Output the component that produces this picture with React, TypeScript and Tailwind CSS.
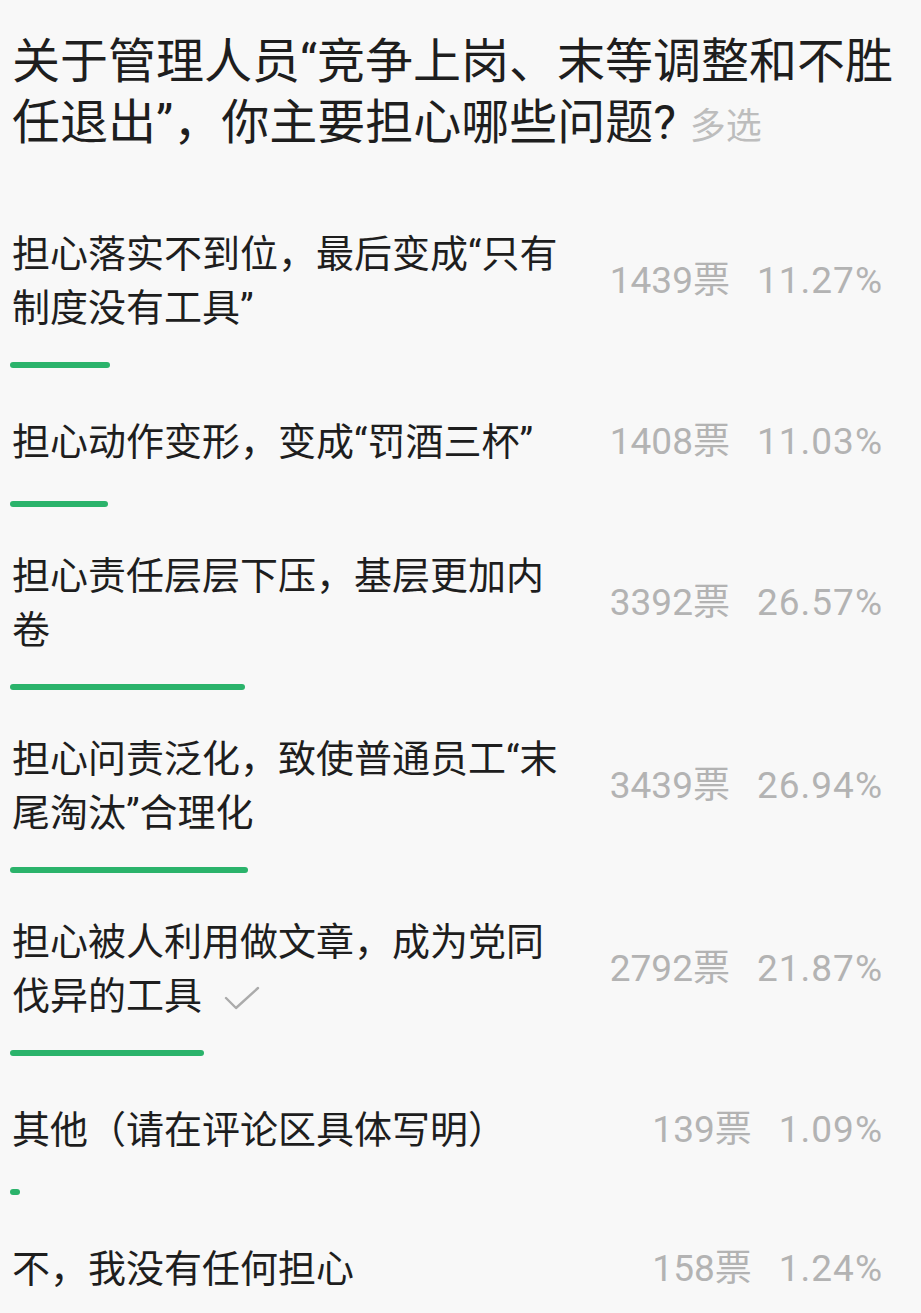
import React from "react";

type Option = {
  label: string;
  votes: number;
  pct: string;
  picked?: boolean;
};

const options: Option[] = [
  { label: "担心落实不到位，最后变成“只有制度没有工具”", votes: 1439, pct: "11.27" },
  { label: "担心动作变形，变成“罚酒三杯”", votes: 1408, pct: "11.03" },
  { label: "担心责任层层下压，基层更加内卷", votes: 3392, pct: "26.57" },
  { label: "担心问责泛化，致使普通员工“末尾淘汰”合理化", votes: 3439, pct: "26.94" },
  { label: "担心被人利用做文章，成为党同伐异的工具", votes: 2792, pct: "21.87", picked: true },
  { label: "其他（请在评论区具体写明）", votes: 139, pct: "1.09" },
  { label: "不，我没有任何担心", votes: 158, pct: "1.24" },
];

// full length of a 100% bar
const TRACK = 885;

function CheckMark() {
  return (
    <svg
      width="36"
      height="26"
      viewBox="0 0 36 26"
      className="inline-block ml-[22px] align-[-2px]"
      fill="none"
      stroke="#ababab"
      strokeWidth="2.4"
      strokeLinecap="round"
      strokeLinejoin="round"
    >
      <polyline points="2,13 12,23 34,3" />
    </svg>
  );
}

export default function App() {
  return (
    <div
      className="min-h-screen bg-[#f8f8f8] pl-[10px] pt-[31px] pb-[40px] text-[#1e1e1e]"
      style={{ fontFamily: 'Roboto, "Noto Sans CJK SC", sans-serif' }}
    >
      <h1 className="text-[48px] leading-[61px] font-normal pl-[2px] pr-[8px]">
        关于管理人员“竞争上岗、末等调整和不胜任退出”，你主要担心哪些问题?
        <span className="ml-[14px] text-[36px] leading-[40px] text-[#bdbdbd]">多选</span>
      </h1>

      <div className="mt-[74px] flex flex-col gap-[42px]">
        {options.map((o) => (
          <div key={o.label}>
            <div className="flex items-center justify-between min-h-[64px] pr-[38px]">
              <div className="w-[556px] flex-none pl-[2px] text-[38px] leading-[54px]">
                {o.label}
                {o.picked && <CheckMark />}
              </div>
              <div className="flex items-center text-[37px] leading-[54px] text-[#b3b3b3] whitespace-nowrap">
                <span>{o.votes}票</span>
                <span className="ml-[27px] tracking-[1px]">{o.pct}%</span>
              </div>
            </div>
            <div
              className="mt-[27px] h-[6px] rounded-full bg-[#2bb36b]"
              style={{ width: `${(parseFloat(o.pct) / 100) * TRACK}px` }}
            />
          </div>
        ))}
      </div>
    </div>
  );
}
